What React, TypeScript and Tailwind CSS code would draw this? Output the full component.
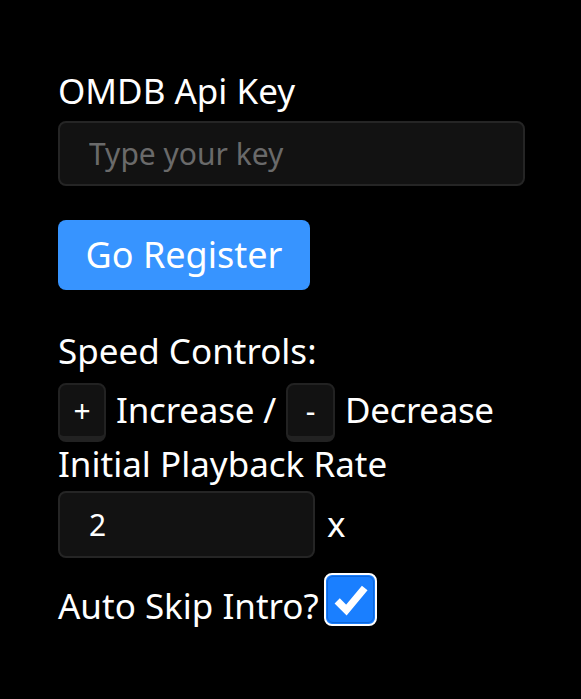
export default function App() {
  return (
    <div className="min-h-[699px] bg-black text-white font-['Noto_Sans',sans-serif] pt-[69px] pl-[58px] pr-[56px]">
      <label className="block text-[35px] leading-[44px]">OMDB Api Key</label>
      <input
        type="text"
        placeholder="Type your key"
        className="mt-[8px] block h-[65px] w-[467px] rounded-lg border-2 border-[#252525] bg-[#121212] px-[29px] text-[30px] text-white placeholder:text-[#6a6a6a] outline-none"
      />

      <button className="mt-[34px] block h-[70px] w-[252px] rounded-lg bg-[#3794ff] text-[36px] text-white">
        Go Register
      </button>

      <div className="mt-[39px] text-[35px] leading-[44px]">Speed Controls:</div>
      <div className="mt-[10px] flex h-[59px] items-center gap-[10px] text-[35px] leading-[44px]">
        <kbd className="flex h-[59px] w-[48px] items-center justify-center rounded-lg border-2 border-b-[6px] border-[#222] bg-[#121212] font-['Noto_Sans',sans-serif] text-[30px]">
          +
        </kbd>
        <span className="pb-[6px] tracking-[-0.2px]">Increase /</span>
        <kbd className="flex h-[59px] w-[49px] items-center justify-center rounded-lg border-2 border-b-[6px] border-[#222] bg-[#121212] font-['Noto_Sans',sans-serif] text-[30px]">
          -
        </kbd>
        <span className="pb-[6px] tracking-[-0.4px]">Decrease</span>
      </div>

      <div className="text-[35px] leading-[44px]">Initial Playback Rate</div>
      <div className="mt-[5px] flex items-center gap-[12px]">
        <input
          type="number"
          defaultValue={2}
          className="block h-[67px] w-[257px] rounded-lg border-2 border-[#252525] bg-[#121212] px-[29px] text-[30px] text-white outline-none"
        />
        <span className="pb-[2px] text-[35px] leading-[44px]">x</span>
      </div>

      <div className="mt-[15px] flex items-start">
        <span className="mt-[11px] text-[35px] leading-[44px]">Auto Skip Intro?</span>
        <span className="ml-[5px] block h-[53px] w-[53px] rounded-[8px] border-[2px] border-white bg-[#1a7fff] p-[1px]">
          <svg viewBox="0 0 49 49" className="h-full w-full rounded-[6px] border border-[#1067d8]">
            <path d="M10 26l10 10L40 12" fill="none" stroke="white" strokeWidth="8" strokeLinecap="butt" strokeLinejoin="miter" />
          </svg>
        </span>
      </div>
    </div>
  )
}
